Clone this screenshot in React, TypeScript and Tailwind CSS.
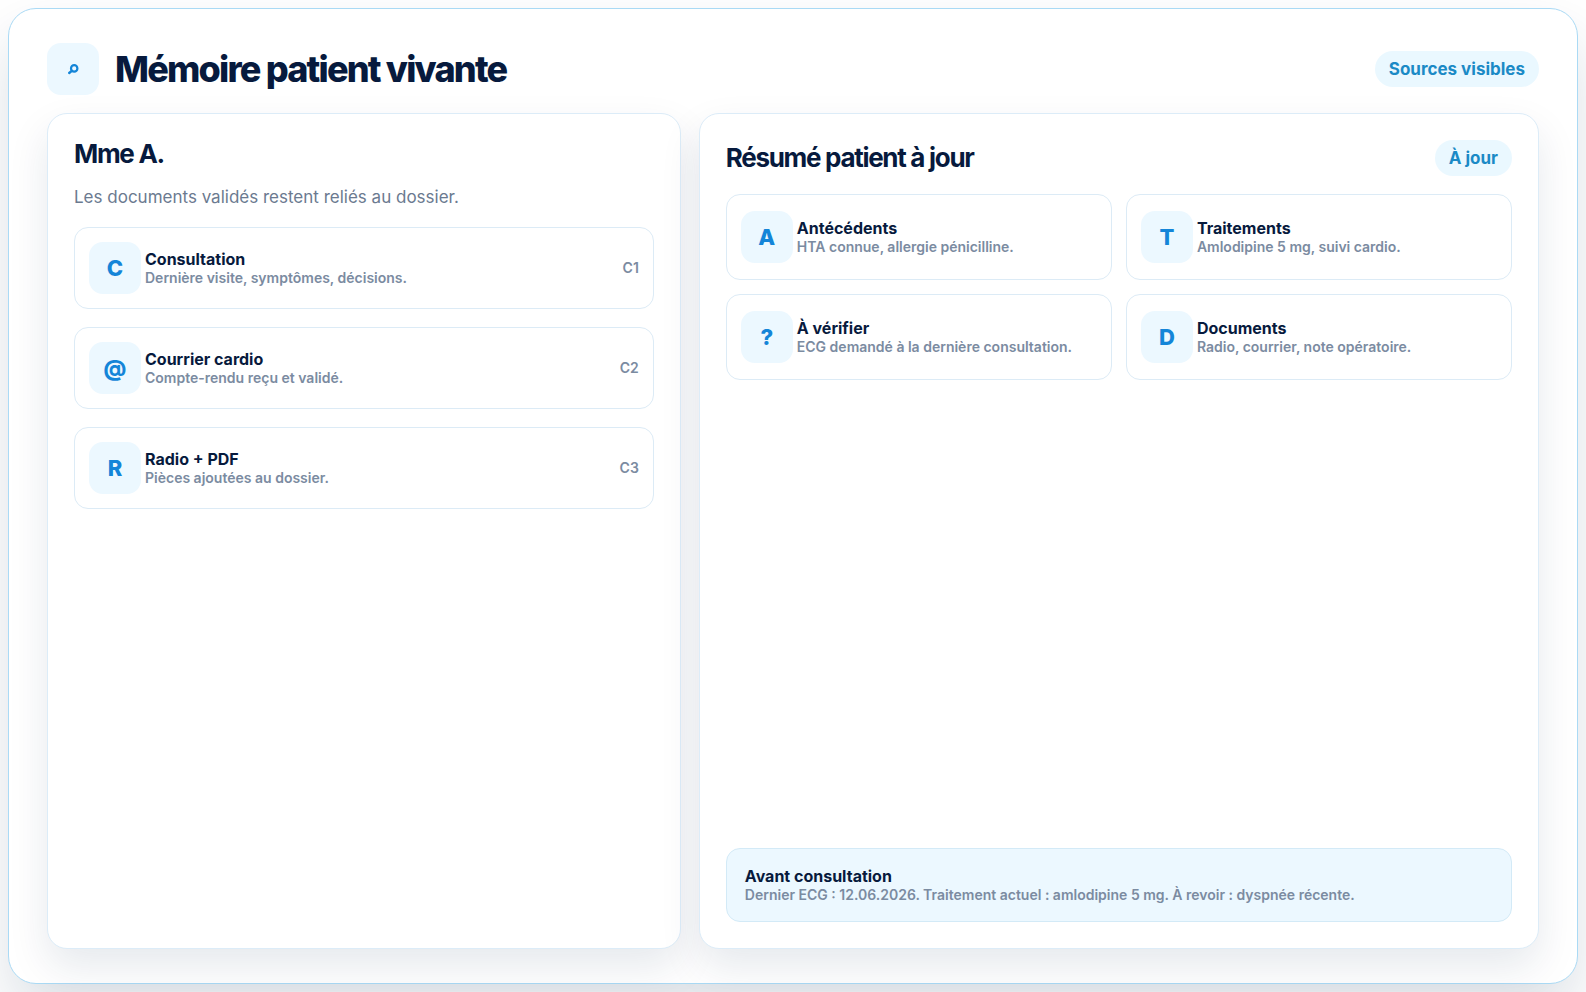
type Item = { mark: string; title: string; detail: string; code?: string };

const sources: Item[] = [
  { mark: "C", title: "Consultation", detail: "Dernière visite, symptômes, décisions.", code: "C1" },
  { mark: "@", title: "Courrier cardio", detail: "Compte-rendu reçu et validé.", code: "C2" },
  { mark: "R", title: "Radio + PDF", detail: "Pièces ajoutées au dossier.", code: "C3" },
];

const summary: Item[] = [
  { mark: "A", title: "Antécédents", detail: "HTA connue, allergie pénicilline." },
  { mark: "T", title: "Traitements", detail: "Amlodipine 5 mg, suivi cardio." },
  { mark: "?", title: "À vérifier", detail: "ECG demandé à la dernière consultation." },
  { mark: "D", title: "Documents", detail: "Radio, courrier, note opératoire." },
];

function Badge({ children }: { children: React.ReactNode }) {
  return (
    <span
      aria-hidden="true"
      className="grid size-[52px] shrink-0 place-items-center rounded-[14px] bg-[#ecf8ff] text-[22px] leading-none font-extrabold text-[#1485d8]"
    >
      {children}
    </span>
  );
}

function Pill({ children }: { children: React.ReactNode }) {
  return (
    <span className="shrink-0 rounded-full bg-[#eaf8ff] px-3.5 py-2 text-[17px] leading-5 font-bold whitespace-nowrap text-[#1b8ac6]">
      {children}
    </span>
  );
}

function Copy({ title, detail }: { title: string; detail: string }) {
  return (
    <div className="min-w-0 flex-1">
      <h3 className="text-base leading-[19px] font-bold text-[#071a3d]">{title}</h3>
      <p className="text-sm leading-[18px] font-semibold text-[#7b8ba1]">{detail}</p>
    </div>
  );
}

const panel =
  "flex flex-col gap-[18px] rounded-[20px] border border-[#dcecf8] bg-white p-[26px] shadow-[0_18px_40px_rgba(8,40,80,0.1)]";

export default function App() {
  return (
    <div className="flex min-h-screen bg-white p-2 font-['Inter','Liberation_Sans',sans-serif] text-[#071a3d]">
      <main className="flex flex-1 flex-col gap-[18px] rounded-[28px] border border-[#aadaf5] bg-white px-[38px] py-[34px] shadow-[0_30px_60px_rgba(8,40,80,0.14)]">
        <header className="flex items-center justify-between gap-4">
          <div className="flex items-center gap-4">
            <Badge>
              <svg width="12" height="12" viewBox="0 0 12 12" fill="none" stroke="currentColor">
                <circle cx="7.2" cy="5.4" r="3.2" strokeWidth="2.2" />
                <path d="M4.8 7.8 2.2 10" strokeWidth="2.4" strokeLinecap="round" />
              </svg>
            </Badge>
            <h1 className="text-4xl leading-10 font-extrabold tracking-tighter">Mémoire patient vivante</h1>
          </div>
          <Pill>Sources visibles</Pill>
        </header>

        <div className="grid flex-1 grid-cols-[43fr_57fr] gap-[18px]">
          <section className={panel}>
            <h2 className="text-[26px] leading-7 font-bold tracking-tighter">Mme A.</h2>
            <p className="text-[17px] leading-[23px] text-[#6b7a90]">Les documents validés restent reliés au dossier.</p>
            <ul className="flex flex-col gap-[18px]">
              {sources.map((s) => (
                <li key={s.title} className="flex items-center gap-1 rounded-[14px] border border-[#dcebf6] p-3.5">
                  <Badge>{s.mark}</Badge>
                  <Copy title={s.title} detail={s.detail} />
                  <span className="text-sm font-semibold text-[#7b8ba1]">{s.code}</span>
                </li>
              ))}
            </ul>
          </section>

          <section className={panel}>
            <div className="flex items-center justify-between gap-4">
              <h2 className="text-[26px] leading-7 font-bold tracking-tighter">Résumé patient à jour</h2>
              <Pill>À jour</Pill>
            </div>
            <ul className="grid grid-cols-2 gap-3.5">
              {summary.map((s) => (
                <li key={s.title} className="flex items-center gap-1 rounded-[14px] border border-[#dcebf6] px-3.5 py-4">
                  <Badge>{s.mark}</Badge>
                  <Copy title={s.title} detail={s.detail} />
                </li>
              ))}
            </ul>
            <aside className="mt-auto flex rounded-[14px] border border-[#d3eaf7] bg-[#ecf8ff] px-[18px] pt-[18px] pb-[17px]">
              <Copy
                title="Avant consultation"
                detail="Dernier ECG : 12.06.2026. Traitement actuel : amlodipine 5 mg. À revoir : dyspnée récente."
              />
            </aside>
          </section>
        </div>
      </main>
    </div>
  );
}
